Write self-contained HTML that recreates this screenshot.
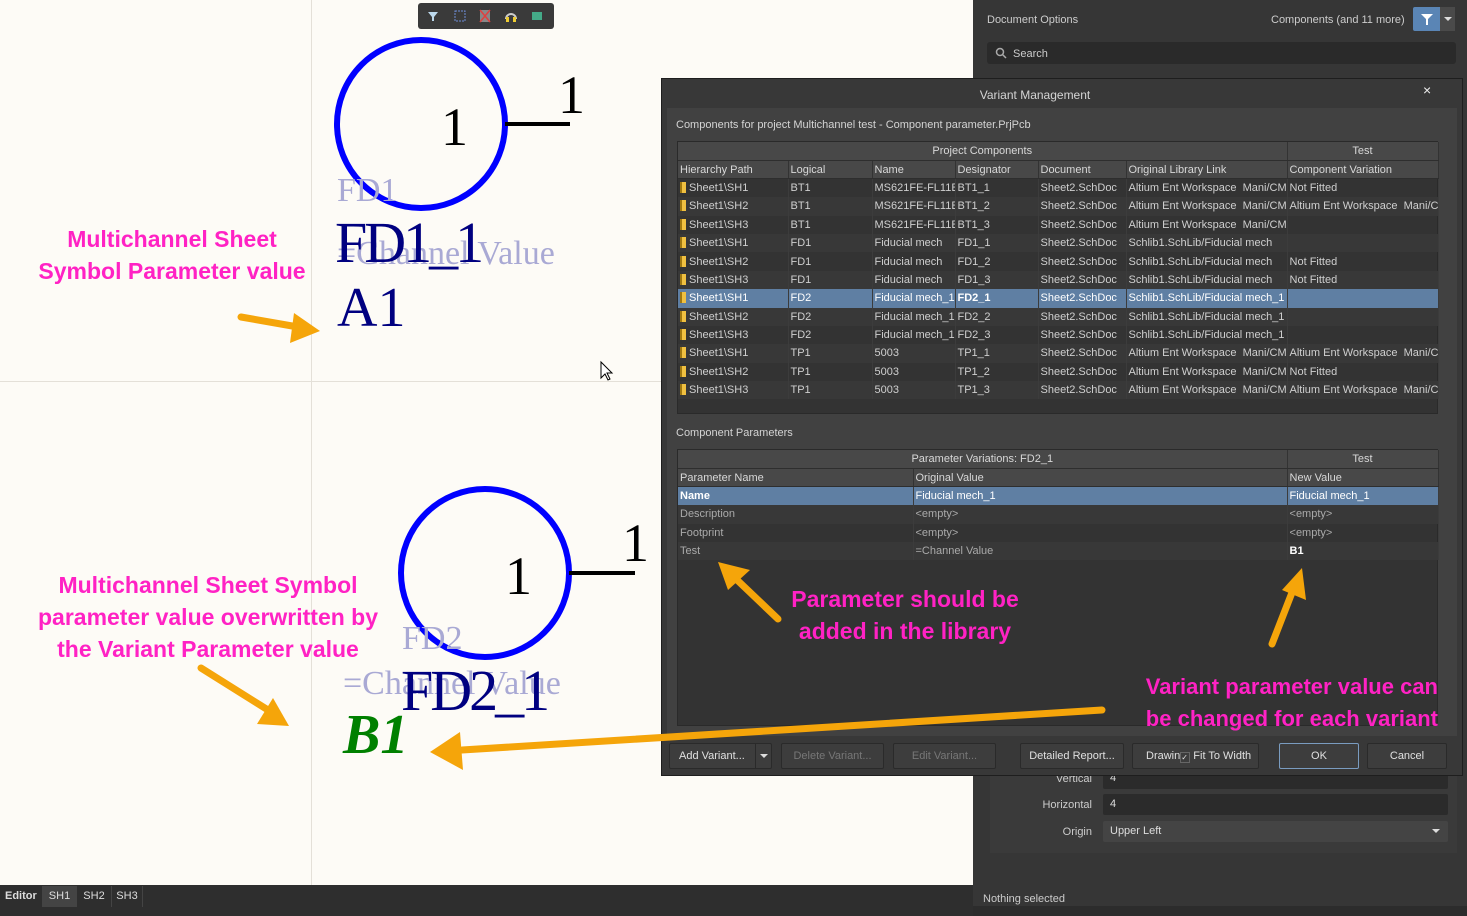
<!DOCTYPE html>
<html><head><meta charset="utf-8"><style>
*{margin:0;padding:0;box-sizing:border-box}
body{width:1467px;height:916px;overflow:hidden;position:relative;background:#fdfbf6;font-family:"Liberation Sans",sans-serif}
.a{position:absolute}
.ui{font-size:11px;color:#d4d4d4;white-space:nowrap}
.tm{font-family:"Liberation Serif",serif;position:absolute;white-space:nowrap;line-height:1}
.pk{position:absolute;color:#ff22c4;font-weight:bold;font-size:23px;text-align:center;line-height:32px;white-space:nowrap}
table{border-collapse:collapse;table-layout:fixed;font-size:11px;color:#cfcfcf}
td{height:18.4px;padding:0 2px;white-space:nowrap;overflow:hidden;border-right:1px solid #3c3c3c}
.hd td{background:#484848;color:#d8d8d8;border-right:1px solid #333;border-bottom:1px solid #2e2e2e}
.sel td{background:#5f7fa3;color:#fff}
.ic{display:inline-block;width:6px;height:11px;background:#f0c040;border-left:2px solid #a07810;vertical-align:-2px;margin-right:3px}
.btn{position:absolute;top:743px;height:26px;background:#3d3d3d;border:1px solid #2a2a2a;border-radius:2px;font-size:11px;color:#e0e0e0;text-align:center;line-height:24px}
.dis{color:#777}
.fld{position:absolute;left:1103px;width:345px;height:21px;background:#2b2b2b;border-radius:2px;font-size:11px;color:#ddd;padding-left:7px;line-height:21px}
.lbl{position:absolute;font-size:11px;color:#ccc;text-align:right;width:80px;left:1012px}
</style></head><body>
<div class="a" style="left:311px;top:0;width:1px;height:885px;background:#e4e0d8"></div>
<div class="a" style="left:0;top:381px;width:973px;height:1px;background:#e4e0d8"></div>
<div class="a" style="left:418px;top:3px;width:136px;height:26px;background:#3a3a3a;border-radius:3px"></div>
<svg class="a" style="left:418px;top:3px" width="136" height="26">
<path d="M10 9h10l-4 5v4h-2v-4z" fill="#bcd8ec"/>
<rect x="37" y="8" width="10" height="10" fill="none" stroke="#6f8fd8" stroke-dasharray="2 1"/>
<rect x="62" y="7" width="10" height="12" fill="#888"/><path d="M62 7l10 12M72 7l-10 12" stroke="#e04040" stroke-width="1.5"/>
<path d="M88 16a5 5 0 0 1 10 0" stroke="#ccc" fill="none" stroke-width="2"/><rect x="88" y="14" width="3" height="5" fill="#ec3"/><rect x="95" y="14" width="3" height="5" fill="#ec3"/>
<rect x="114" y="9" width="10" height="8" fill="#4a8"/>
</svg>
<svg class="a" style="left:0;top:0" width="973" height="885">
<circle cx="421" cy="124" r="84" fill="none" stroke="#0000ff" stroke-width="6"/>
<line x1="505" y1="124" x2="570" y2="124" stroke="#000" stroke-width="4"/>
<circle cx="485" cy="573" r="84" fill="none" stroke="#0000ff" stroke-width="6"/>
<line x1="569" y1="573" x2="635" y2="573" stroke="#000" stroke-width="4"/>
<path d="M601 362v16l4-4 3 6 2-1-3-6h5z" fill="#fff" stroke="#000"/>
</svg>
<div class="tm" style="left:441px;top:100px;font-size:54px">1</div>
<div class="tm" style="left:558px;top:68px;font-size:54px">1</div>
<div class="tm" style="left:337px;top:174px;font-size:34px;color:#a9a9d4">FD1</div>
<div class="tm" style="left:337px;top:237px;font-size:34px;color:#a9a9d4">=Channel Value</div>
<div class="tm" style="left:335px;top:214px;font-size:58px;color:#000080;letter-spacing:-3px">FD1_1</div>
<div class="tm" style="left:337px;top:280px;font-size:56px;color:#000080">A1</div>
<div class="tm" style="left:505px;top:549px;font-size:54px">1</div>
<div class="tm" style="left:622px;top:516px;font-size:54px">1</div>
<div class="tm" style="left:402px;top:622px;font-size:34px;color:#a9a9d4">FD2</div>
<div class="tm" style="left:343px;top:667px;font-size:34px;color:#a9a9d4">=Channel Value</div>
<div class="tm" style="left:401px;top:662px;font-size:58px;color:#000080;letter-spacing:-3px">FD2_1</div>
<div class="tm" style="left:343px;top:707px;font-size:56px;color:#008000;font-weight:bold;font-style:italic">B1</div>
<div class="a" style="left:0;top:885px;width:973px;height:31px;background:#2e2e2e"></div>
<div class="a" style="left:0;top:886px;width:145px;height:21px;font-size:11px;color:#ddd;line-height:21px">
<span style="position:absolute;left:5px;font-weight:bold">Editor</span>
<span style="position:absolute;left:42px;width:35px;background:#444;text-align:center">SH1</span>
<span style="position:absolute;left:78px;width:32px;text-align:center">SH2</span>
<span style="position:absolute;left:111px;width:32px;text-align:center;border-left:1px solid #444;border-right:1px solid #444">SH3</span></div>
<div class="a" style="left:973px;top:0;width:494px;height:916px;background:#363636"></div>
<div class="a ui" style="left:987px;top:14px;color:#ccc">Document Options</div>
<div class="a ui" style="left:1271px;top:14px;color:#ccc">Components (and 11 more)</div>
<div class="a" style="left:1413px;top:7px;width:27px;height:24px;background:#5a85b5;border-radius:2px 0 0 2px"></div>
<svg class="a" style="left:1420px;top:12px" width="14" height="14"><path d="M1 2h12l-5 5v6h-2v-6z" fill="#fff"/></svg>
<div class="a" style="left:1440px;top:7px;width:15px;height:24px;background:#4a4a4a"></div>
<div class="a" style="left:1444px;top:17px;border:4px solid transparent;border-top:4px solid #ddd"></div>
<div class="a" style="left:987px;top:42px;width:469px;height:22px;background:#2a2a2a;border-radius:3px"></div>
<svg class="a" style="left:995px;top:47px" width="12" height="12"><circle cx="5" cy="5" r="3.5" fill="none" stroke="#aaa" stroke-width="1.5"/><path d="M7.5 7.5l3.5 3.5" stroke="#aaa" stroke-width="1.5"/></svg>
<div class="a ui" style="left:1013px;top:48px;color:#ccc">Search</div>
<div class="a" style="left:990px;top:765px;width:467px;height:88px;background:#3a3a3a"></div>
<div class="lbl" style="top:773px">Vertical</div><div class="fld" style="top:768px">4</div>
<div class="lbl" style="top:799px">Horizontal</div><div class="fld" style="top:794px">4</div>
<div class="lbl" style="top:826px">Origin</div><div class="fld" style="top:821px;background:#444">Upper Left<span style="position:absolute;right:8px;top:8px;border:4px solid transparent;border-top:4px solid #ddd"></span></div>
<div class="a ui" style="left:983px;top:893px;color:#ccc">Nothing selected</div>
<div class="a" style="left:973px;top:906px;width:494px;height:10px;background:#2c2c2c"></div>
<div class="a" style="left:661px;top:78px;width:802px;height:698px;background:#383838;border:1px solid #1e1e1e"></div>
<div class="a ui" style="left:662px;top:88px;width:746px;text-align:center;font-size:12px">Variant Management</div>
<div class="a" style="left:1423px;top:82px;color:#eee;font-size:14px">×</div>
<div class="a" style="left:667px;top:108px;width:790px;height:628px;background:#414141"></div>
<div class="a ui" style="left:676px;top:119px">Components for project Multichannel test - Component parameter.PrjPcb</div>
<div class="a" style="left:677px;top:141px;width:761px;height:273px;background:#333;border:1px solid #2a2a2a">
<table style="width:760px">
<colgroup><col style="width:110px"><col style="width:84px"><col style="width:83px"><col style="width:83px"><col style="width:88px"><col style="width:161px"><col style="width:151px"></colgroup>
<tr class="hd"><td colspan="6" style="text-align:center">Project Components</td><td style="text-align:center">Test</td></tr>
<tr class="hd"><td>Hierarchy Path</td><td>Logical</td><td>Name</td><td>Designator</td><td>Document</td><td>Original Library Link</td><td>Component Variation</td></tr>
<tr><td><i class="ic"></i>Sheet1\SH1</td><td>BT1</td><td>MS621FE-FL11E</td><td>BT1_1</td><td>Sheet2.SchDoc</td><td>Altium Ent Workspace&nbsp; Mani/CMP</td><td>Not Fitted</td></tr>
<tr style="background:#383838"><td><i class="ic"></i>Sheet1\SH2</td><td>BT1</td><td>MS621FE-FL11E</td><td>BT1_2</td><td>Sheet2.SchDoc</td><td>Altium Ent Workspace&nbsp; Mani/CMP</td><td>Altium Ent Workspace&nbsp; Mani/C</td></tr>
<tr><td><i class="ic"></i>Sheet1\SH3</td><td>BT1</td><td>MS621FE-FL11E</td><td>BT1_3</td><td>Sheet2.SchDoc</td><td>Altium Ent Workspace&nbsp; Mani/CMP</td><td></td></tr>
<tr style="background:#383838"><td><i class="ic"></i>Sheet1\SH1</td><td>FD1</td><td>Fiducial mech</td><td>FD1_1</td><td>Sheet2.SchDoc</td><td>Schlib1.SchLib/Fiducial mech</td><td></td></tr>
<tr><td><i class="ic"></i>Sheet1\SH2</td><td>FD1</td><td>Fiducial mech</td><td>FD1_2</td><td>Sheet2.SchDoc</td><td>Schlib1.SchLib/Fiducial mech</td><td>Not Fitted</td></tr>
<tr style="background:#383838"><td><i class="ic"></i>Sheet1\SH3</td><td>FD1</td><td>Fiducial mech</td><td>FD1_3</td><td>Sheet2.SchDoc</td><td>Schlib1.SchLib/Fiducial mech</td><td>Not Fitted</td></tr>
<tr class="sel"><td><i class="ic"></i>Sheet1\SH1</td><td>FD2</td><td>Fiducial mech_1</td><td><b>FD2_1</b></td><td>Sheet2.SchDoc</td><td>Schlib1.SchLib/Fiducial mech_1</td><td></td></tr>
<tr style="background:#383838"><td><i class="ic"></i>Sheet1\SH2</td><td>FD2</td><td>Fiducial mech_1</td><td>FD2_2</td><td>Sheet2.SchDoc</td><td>Schlib1.SchLib/Fiducial mech_1</td><td></td></tr>
<tr><td><i class="ic"></i>Sheet1\SH3</td><td>FD2</td><td>Fiducial mech_1</td><td>FD2_3</td><td>Sheet2.SchDoc</td><td>Schlib1.SchLib/Fiducial mech_1</td><td></td></tr>
<tr style="background:#383838"><td><i class="ic"></i>Sheet1\SH1</td><td>TP1</td><td>5003</td><td>TP1_1</td><td>Sheet2.SchDoc</td><td>Altium Ent Workspace&nbsp; Mani/CMP</td><td>Altium Ent Workspace&nbsp; Mani/C</td></tr>
<tr><td><i class="ic"></i>Sheet1\SH2</td><td>TP1</td><td>5003</td><td>TP1_2</td><td>Sheet2.SchDoc</td><td>Altium Ent Workspace&nbsp; Mani/CMP</td><td>Not Fitted</td></tr>
<tr style="background:#383838"><td><i class="ic"></i>Sheet1\SH3</td><td>TP1</td><td>5003</td><td>TP1_3</td><td>Sheet2.SchDoc</td><td>Altium Ent Workspace&nbsp; Mani/CMP</td><td>Altium Ent Workspace&nbsp; Mani/C</td></tr>
</table></div>
<div class="a ui" style="left:676px;top:427px">Component Parameters</div>
<div class="a" style="left:677px;top:449px;width:761px;height:277px;background:#333;border:1px solid #2a2a2a">
<table style="width:760px">
<colgroup><col style="width:235px"><col style="width:374px"><col style="width:151px"></colgroup>
<tr class="hd"><td colspan="2" style="text-align:center">Parameter Variations: FD2_1</td><td style="text-align:center">Test</td></tr>
<tr class="hd"><td>Parameter Name</td><td>Original Value</td><td>New Value</td></tr>
<tr class="sel"><td><b>Name</b></td><td>Fiducial mech_1</td><td>Fiducial mech_1</td></tr>
<tr style="background:#383838;color:#aaa"><td>Description</td><td>&lt;empty&gt;</td><td>&lt;empty&gt;</td></tr>
<tr style="color:#aaa"><td>Footprint</td><td>&lt;empty&gt;</td><td>&lt;empty&gt;</td></tr>
<tr style="background:#383838;color:#aaa"><td>Test</td><td>=Channel Value</td><td style="color:#fff"><b>B1</b></td></tr>
</table></div>
<div class="btn" style="left:669px;width:103px;text-align:left;padding-left:9px">Add Variant...<span style="position:absolute;left:85px;top:0;width:1px;height:24px;background:#2a2a2a"></span><span style="position:absolute;left:90px;top:10px;border:4px solid transparent;border-top:4px solid #ddd"></span></div>
<div class="btn dis" style="left:781px;width:103px">Delete Variant...</div>
<div class="btn dis" style="left:893px;width:103px">Edit Variant...</div>
<div class="btn" style="left:1020px;width:104px">Detailed Report...</div>
<div class="btn" style="left:1132px;width:127px;text-align:left;padding-left:13px">Drawin<span style="display:inline-block;width:10px;height:11px;border:1px solid #666;font-size:8px;line-height:9px;vertical-align:-1px">✓</span> Fit To Width</div>
<div class="btn" style="left:1279px;width:80px;border:1px solid #7a9cc0">OK</div>
<div class="btn" style="left:1367px;width:80px">Cancel</div>
<div class="pk" style="left:20px;top:223px;width:304px">Multichannel Sheet<br>Symbol Parameter value</div>
<div class="pk" style="left:18px;top:569px;width:380px">Multichannel Sheet Symbol<br>parameter value overwritten by<br>the Variant Parameter value</div>
<div class="pk" style="left:770px;top:583px;width:270px">Parameter should be<br>added in the library</div>
<div class="pk" style="left:1090px;top:671px;width:348px;text-align:right;font-size:22px;line-height:32px">Variant parameter value can<br>be changed for each variant</div>
<svg class="a" style="left:0;top:0" width="1467" height="916">
<g stroke="#f5a50a" stroke-width="7" stroke-linecap="round" fill="#f5a50a">
<line x1="241" y1="317" x2="298" y2="327"/>
<line x1="201" y1="668" x2="268" y2="710"/>
<line x1="1102" y1="710" x2="462" y2="750"/>
<line x1="778" y1="619" x2="735" y2="578"/>
<line x1="1272" y1="644" x2="1293" y2="590"/>
</g>
<g fill="#f5a50a">
<path d="M320 331l-30 12 4-30z"/>
<path d="M289 726l-32-2 16-26z"/>
<path d="M430 752l30-20 3 38z"/>
<path d="M718 562l32 8-22 20z"/>
<path d="M1302 568l4 32-24-10z"/>
</g>
</svg>
</body></html>
